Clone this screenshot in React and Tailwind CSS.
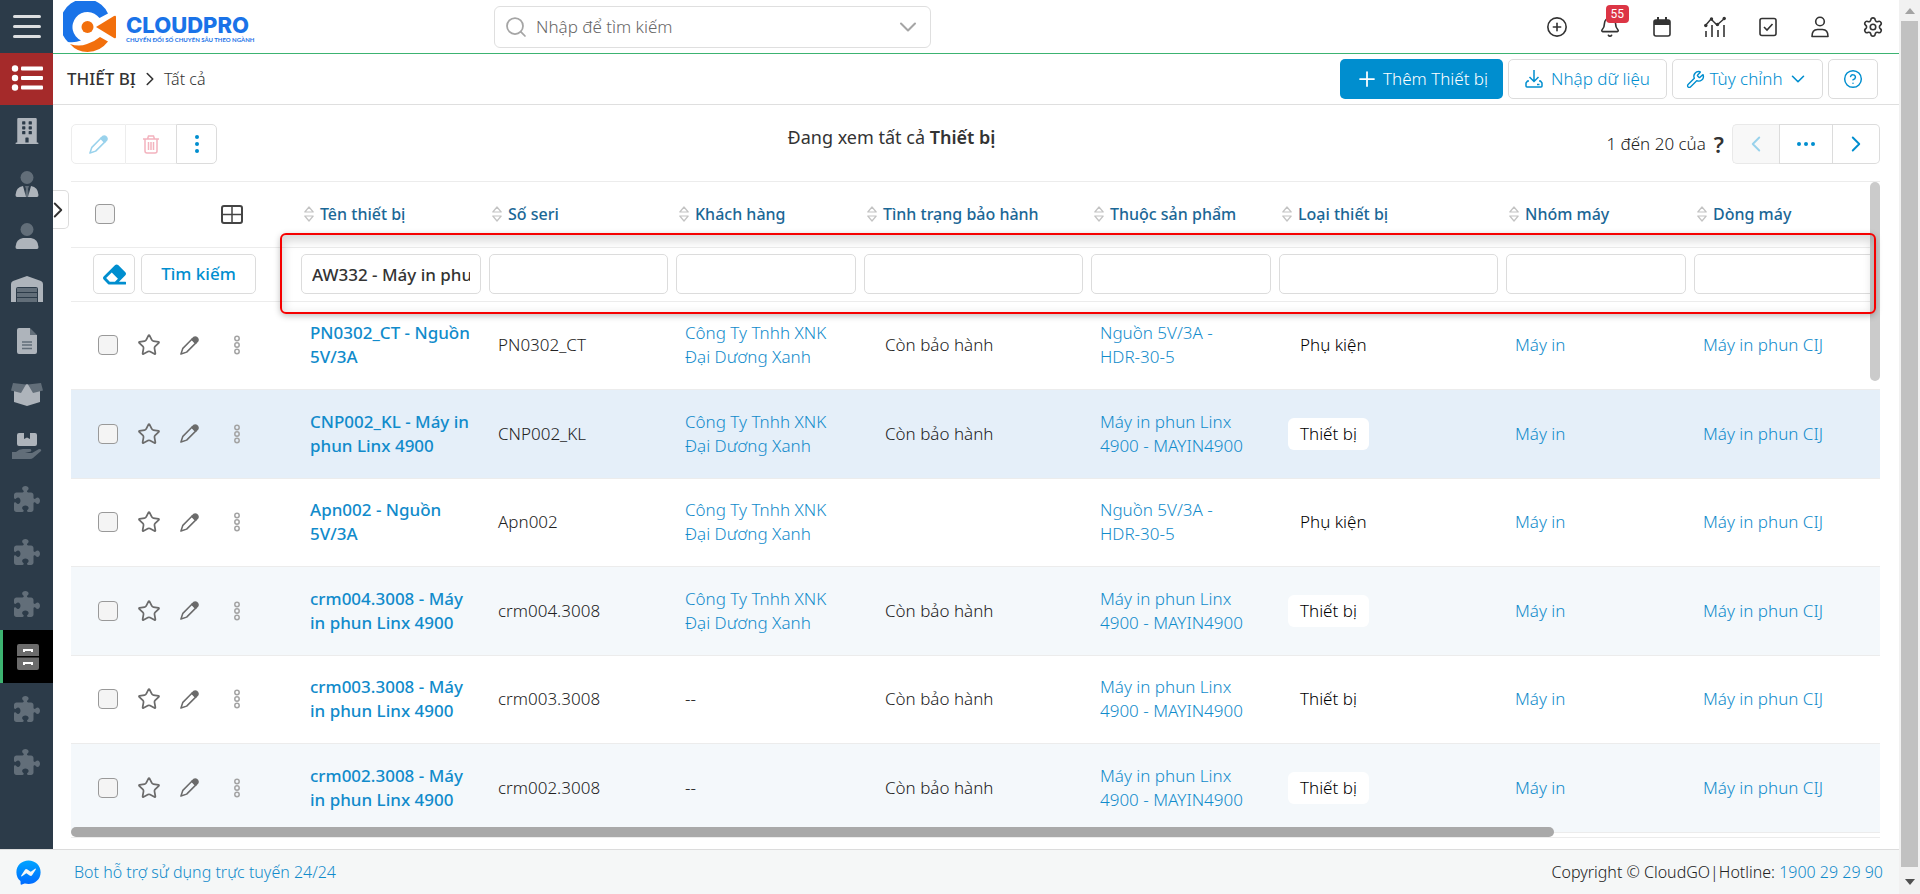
import { useState } from "react";
import {
  FaBuilding,
  FaEraser,
  FaFacebookMessenger,
} from "react-icons/fa";
import { FaPuzzlePiece } from "react-icons/fa6";
import {
  CirclePlus,
  Bell,
  Search,
  ChevronDown,
  ChevronLeft,
  ChevronRight,
  Plus,
  Wrench,
  CircleQuestionMark,
  Settings,
  Star,
} from "lucide-react";

const COLUMNS = [
  { key: "name", label: "Tên thiết bị", width: "w-[188px]" },
  { key: "serial", label: "Số seri", width: "w-[187px]" },
  { key: "customer", label: "Khách hàng", width: "w-[188px]" },
  { key: "warranty", label: "Tình trạng bảo hành", width: "w-[227px]" },
  { key: "product", label: "Thuộc sản phẩm", width: "w-[188px]" },
  { key: "type", label: "Loại thiết bị", width: "w-[227px]" },
  { key: "group", label: "Nhóm máy", width: "w-[188px]" },
  { key: "line", label: "Dòng máy", width: "" },
];

const COMPANY = "Công Ty Tnhh XNK Đại Dương Xanh";
const LINX = "Máy in phun Linx 4900 - MAYIN4900";
const POWER = "Nguồn 5V/3A - HDR-30-5";

const ROWS = [
  { name: "PN0302_CT - Nguồn 5V/3A", serial: "PN0302_CT", customer: COMPANY, warranty: "Còn bảo hành", product: POWER, type: "Phụ kiện" },
  { name: "CNP002_KL - Máy in phun Linx 4900", serial: "CNP002_KL", customer: COMPANY, warranty: "Còn bảo hành", product: LINX, type: "Thiết bị", active: true },
  { name: "Apn002 - Nguồn 5V/3A", serial: "Apn002", customer: COMPANY, warranty: "", product: POWER, type: "Phụ kiện" },
  { name: "crm004.3008 - Máy in phun Linx 4900", serial: "crm004.3008", customer: COMPANY, warranty: "Còn bảo hành", product: LINX, type: "Thiết bị" },
  { name: "crm003.3008 - Máy in phun Linx 4900", serial: "crm003.3008", customer: "", warranty: "Còn bảo hành", product: LINX, type: "Thiết bị" },
  { name: "crm002.3008 - Máy in phun Linx 4900", serial: "crm002.3008", customer: "", warranty: "Còn bảo hành", product: LINX, type: "Thiết bị" },
];

/* ---------- icons ---------- */

function LogoMark() {
  return (
    <svg viewBox="0 0 54 52" className="h-[52px] w-[54px]" aria-hidden="true">
      <path
        d="M45 12.500A25 25 0 1 0 5 41Q12 42 18 39.500A15 15 0 1 1 36.500 17Z"
        fill="#1a73e8"
      />
      <path d="M7 43Q16 46 24 43Q31 41 37 36L45 40.500Q37 51 24.500 51Q14 51 7 43Z" fill="#f26f0c" />
      <circle cx="24.500" cy="26" r="6" fill="#f26f0c" />
      <path d="M33 26L51 15Q53 14 53 16V36Q53 38 51 37Z" fill="#f26f0c" />
    </svg>
  );
}

function TieIcon() {
  return (
    <svg viewBox="0 0 24 26" className="h-[26px] w-6" aria-hidden="true">
      <circle cx="12" cy="6.500" r="6.500" fill="#626e79" />
      <path d="M10 15h4l-1 3 1 8h-4l1-8z" fill="#626e79" />
      <path d="M8 15l3 11H2Q.5 26 .5 24Q1 16 8 15zM16 15l-3 11h9q1.500 0 1.500-2Q23 16 16 15z" fill="#aeb4bb" />
    </svg>
  );
}

function UserIcon() {
  return (
    <svg viewBox="0 0 24 26" className="h-[26px] w-6" aria-hidden="true">
      <circle cx="12" cy="6.500" r="6.500" fill="#626e79" />
      <path d="M8 15h8q7 1 7.500 9 0 2-1.500 2H2Q.5 26 .5 24 1 16 8 15z" fill="#aeb4bb" />
    </svg>
  );
}

function WarehouseIcon() {
  return (
    <svg viewBox="0 0 34 26" className="h-[26px] w-[34px]" aria-hidden="true">
      <path d="M1 26V8Q1 6 3 5L17 0L31 5Q33 6 33 8V26H28V13Q28 11 26 11H8Q6 11 6 13V26Z" fill="#aeb4bb" />
      <path d="M7 12h20v4H7zM7 17h20v4H7zM7 22h20v4H7z" fill="#626e79" />
    </svg>
  );
}

function FileIcon() {
  return (
    <svg viewBox="0 0 20 26" className="h-[26px] w-5" aria-hidden="true">
      <path d="M2 0H13V7H20V24Q20 26 18 26H2Q0 26 0 24V2Q0 0 2 0Z" fill="#aeb4bb" />
      <path d="M13 0L20 7H13Z" fill="#626e79" />
      <path d="M5 14h10M5 17h10M5 20.500h10" stroke="#626e79" strokeWidth="1.500" />
    </svg>
  );
}

function BoxIcon() {
  return (
    <svg viewBox="0 0 34 24" className="h-6 w-[34px]" aria-hidden="true">
      <path d="M4 9L17 2L30 9V20L17 24L4 20Z" fill="#aeb4bb" />
      <path d="M3 1L16 2.500L11 11L1 8.500ZM31 1L18 2.500L23 11L33 8.500Z" fill="#626e79" />
    </svg>
  );
}

function HandBoxIcon() {
  return (
    <svg viewBox="0 0 30 26" className="h-[26px] w-[30px]" aria-hidden="true">
      <path d="M7 0H12V6L15 4.500L18 6V0H23Q25 0 25 2V11Q25 13 23 13H7Q5 13 5 11V2Q5 0 7 0Z" fill="#aeb4bb" />
      <path d="M0 19H4Q7 16 11 16H18Q20 16.500 19 18.500L13 20H20L27 16Q30 16 29 18L21 25Q20 26 18 26H0Z" fill="#626e79" />
    </svg>
  );
}

function CabinetIcon() {
  return (
    <svg viewBox="0 0 24 26" className="h-[26px] w-6" aria-hidden="true">
      <path d="M3 0H21Q23 0 23 2V12H1V2Q1 0 3 0ZM1 13.500H23V24Q23 26 21 26H3Q1 26 1 24Z" fill="#6b6b6b" />
      <path d="M8 8V6H16V8M8 21V19H16V21" stroke="#fff" strokeWidth="2" fill="none" />
    </svg>
  );
}

function BuildingIcon() {
  return <FaBuilding className="h-[26px] w-6 text-[#aeb4bb]" />;
}

function PuzzleIcon() {
  return <FaPuzzlePiece className="size-[26px] text-[#626e79]" />;
}

function ListIcon() {
  return (
    <svg viewBox="0 0 32 26" className="h-[26px] w-8" fill="#fff" aria-hidden="true">
      <circle cx="4" cy="3.500" r="3.200" />
      <circle cx="4" cy="13" r="3.200" />
      <circle cx="4" cy="22.500" r="3.200" />
      <rect x="10" y="1.500" width="22" height="4" rx="1" />
      <rect x="10" y="11" width="22" height="4" rx="1" />
      <rect x="10" y="20.500" width="22" height="4" rx="1" />
    </svg>
  );
}

function PencilIcon({ className }) {
  return (
    <svg viewBox="0 0 20 20" className={className} fill="none" stroke="currentColor" strokeWidth="1.600" strokeLinejoin="round" aria-hidden="true">
      <path d="M12.500 3.500L3 13L1 19L7 17L16.500 7.500Z" />
      <path d="M12.500 3.500L14.500 1.500Q16 .5 17.500 1.500L18.500 2.500Q19.500 4 18.500 5.500L16.500 7.500Z" fill="currentColor" />
    </svg>
  );
}

function TrashIcon() {
  return (
    <svg viewBox="0 0 16 19" className="h-[19px] w-4" fill="none" stroke="#f3b3be" strokeWidth="1.500" aria-hidden="true">
      <path d="M0 4H16M4.500 4L5.500 1H10.500L11.500 4M2 4V16Q2 18 4 18H12Q14 18 14 16V4M5.500 7V15M8 7V15M10.500 7V15" />
    </svg>
  );
}

function TableIcon() {
  return (
    <svg viewBox="0 0 22 20" className="h-5 w-[22px]" fill="none" stroke="#444" strokeWidth="2" aria-hidden="true">
      <rect x="1" y="2" width="20" height="17" rx="2" />
      <path d="M1 10.500H21M11 2V19" strokeWidth="1.500" />
    </svg>
  );
}

function SortIcon() {
  return (
    <svg viewBox="0 0 10 16" className="h-4 w-[10px] shrink-0" fill="none" stroke="#c3c3c3" strokeWidth="1.200" strokeLinejoin="round" aria-hidden="true">
      <path d="M5 1L9.200 6H.8ZM5 15L.8 10H9.200Z" />
    </svg>
  );
}

function DotsIcon() {
  return (
    <svg viewBox="0 0 8 20" className="h-5 w-2" fill="none" stroke="#a3a3a3" strokeWidth="1.500" aria-hidden="true">
      <circle cx="4" cy="3.500" r="2.200" />
      <circle cx="4" cy="10" r="2.200" />
      <circle cx="4" cy="16.500" r="2.200" />
    </svg>
  );
}

function CalendarIcon() {
  return (
    <svg viewBox="0 0 18 20" className="h-5 w-[18px]" aria-hidden="true">
      <rect x="1" y="3" width="16" height="16" rx="2" fill="none" stroke="#333" strokeWidth="1.600" />
      <path d="M1 3H17V8H1ZM4 0H6V4H4ZM12 0H14V4H12Z" fill="#333" />
    </svg>
  );
}

function ReportIcon() {
  return (
    <svg viewBox="0 0 22 22" className="h-[22px] w-[22px]" fill="none" stroke="#333" strokeWidth="1.500" aria-hidden="true">
      <path d="M1 10L7 3L13 9L21 2" />
      <path d="M2 15V21M8 9V21M14 14V21M20 9V21" strokeWidth="1.600" />
      <g fill="#333" stroke="none">
        <circle cx="1.800" cy="9.500" r="1.700" />
        <circle cx="7.500" cy="3" r="1.700" />
        <circle cx="13.500" cy="8.500" r="1.700" />
        <circle cx="20.200" cy="2.500" r="1.700" />
      </g>
    </svg>
  );
}

function TaskIcon() {
  return (
    <svg viewBox="0 0 18 20" className="h-5 w-[18px]" fill="none" stroke="#333" strokeWidth="1.600" aria-hidden="true">
      <rect x="1" y="1.500" width="16" height="17" rx="2" />
      <path d="M5 10L8 13L13.500 7" />
    </svg>
  );
}

function ProfileIcon() {
  return (
    <svg viewBox="0 0 18 22" className="h-[22px] w-[18px]" fill="none" stroke="#333" strokeWidth="1.600" aria-hidden="true">
      <circle cx="9" cy="5.500" r="4.300" />
      <path d="M1 20.500Q1 13.500 6.500 13.500H11.500Q17 13.500 17 20.500Z" strokeLinejoin="round" />
    </svg>
  );
}

function ImportIcon() {
  return (
    <svg viewBox="0 0 18 18" className="h-[18px] w-[18px]" fill="none" stroke="currentColor" strokeWidth="1.500" aria-hidden="true">
      <path d="M9 0V11M4.500 7L9 11.500L13.500 7" />
      <path d="M4 11H2.500L1 13V16Q1 17 2 17H16Q17 17 17 16V13L15.500 11H14M12 14.500H14.500" />
    </svg>
  );
}

/* ---------- layout parts ---------- */

const MENU = [
  { label: "Khách hàng tổ chức", Icon: BuildingIcon },
  { label: "Người liên hệ", Icon: TieIcon },
  { label: "Cá nhân", Icon: UserIcon },
  { label: "Kho", Icon: WarehouseIcon },
  { label: "Tài liệu", Icon: FileIcon },
  { label: "Sản phẩm", Icon: BoxIcon },
  { label: "Giao hàng", Icon: HandBoxIcon },
  { label: "Mở rộng 1", Icon: PuzzleIcon },
  { label: "Mở rộng 2", Icon: PuzzleIcon },
  { label: "Mở rộng 3", Icon: PuzzleIcon },
  { label: "Thiết bị", Icon: CabinetIcon, active: true },
  { label: "Mở rộng 4", Icon: PuzzleIcon },
  { label: "Mở rộng 5", Icon: PuzzleIcon },
];

function Sidebar() {
  return (
    <aside className="flex w-[53px] shrink-0 flex-col bg-[#2c3b49]">
      <button aria-label="Menu" className="flex h-[53px] flex-col items-center justify-center gap-[7px]">
        <span className="h-[3px] w-7 rounded-sm bg-[#dcdee0]" />
        <span className="h-[3px] w-7 rounded-sm bg-[#dcdee0]" />
        <span className="h-[3px] w-7 rounded-sm bg-[#dcdee0]" />
      </button>
      <button aria-label="Danh sách" className="flex h-[52px] items-center justify-center bg-[#a52a2a] pb-[2px]">
        <ListIcon />
      </button>
      <nav className="flex h-[683px] flex-col">
        {MENU.map(({ label, Icon, active }) => (
          <a
            key={label}
            href="#"
            aria-label={label}
            className={`flex flex-1 items-center justify-center ${
              active ? "border-l-[3px] border-[#3cb371] bg-black" : ""
            }`}
          >
            <Icon />
          </a>
        ))}
      </nav>
    </aside>
  );
}

function TopBar() {
  const item = "relative flex flex-1 items-center justify-center";
  return (
    <header className="flex h-[54px] items-center border-b border-[#3cb371] pl-[10px]">
      <a href="#" className="flex w-[431px] items-center gap-[9px]" aria-label="CloudPro">
        <LogoMark />
        <span className="flex flex-col pt-1 text-[#1a73e8]">
          <span className="font-['Inter',sans-serif] text-[22px] leading-[22px] font-extrabold">CLOUDPRO</span>
          <span className="font-['Lato',sans-serif] text-[6px] leading-2 font-bold whitespace-nowrap">
            CHUYỂN ĐỔI SỐ CHUYÊN SÂU THEO NGÀNH
          </span>
        </span>
      </a>
      <label className="flex h-[42px] w-[437px] items-center gap-2 rounded-md border border-[#dfdfdf] pr-2 pl-[9px]">
        <Search className="size-6 text-[#a5a5a5]" strokeWidth={1.75} />
        <input
          type="text"
          aria-label="Tìm kiếm"
          placeholder="Nhập để tìm kiếm"
          className="min-w-0 flex-1 text-[17px] font-light outline-none placeholder:text-[#666]"
        />
        <ChevronDown className="size-7 text-[#a5a5a5]" strokeWidth={1.75} />
      </label>
      <div className="ml-auto flex h-full w-[368px] items-center text-[#333]">
        <button className={item} aria-label="Thêm nhanh">
          <CirclePlus className="size-[22px]" strokeWidth={1.75} />
        </button>
        <button className={item} aria-label="Thông báo">
          <Bell className="size-[22px]" strokeWidth={1.75} />
          <span className="absolute -top-[11px] left-[22px] rounded bg-[#dc3545] px-[5px] font-['Roboto',sans-serif] text-[12px] leading-[18px] text-white">
            55
          </span>
        </button>
        <button className={item} aria-label="Lịch"><CalendarIcon /></button>
        <button className={item} aria-label="Báo cáo"><ReportIcon /></button>
        <button className={item} aria-label="Công việc"><TaskIcon /></button>
        <button className={item} aria-label="Tài khoản"><ProfileIcon /></button>
        <button className={item} aria-label="Cài đặt">
          <Settings className="size-[22px]" strokeWidth={1.75} />
        </button>
      </div>
    </header>
  );
}

function ActionBar() {
  const btn =
    "flex h-10 items-center justify-center rounded-[5px] border border-[#dcdcdc] text-[17px] font-light text-[#008ecf]";
  return (
    <div className="flex h-[51px] items-center border-b border-[#dfdfdf] pr-[21px] pl-[14px] text-[#333]">
      <h1 className="text-[17px] font-medium">THIẾT BỊ</h1>
      <ChevronRight className="mx-[3px] size-[22px]" strokeWidth={1.75} />
      <a href="#" className="text-base font-light">Tất cả</a>
      <div className="ml-auto flex gap-[5px]">
        <button className="flex h-10 w-[163px] items-center justify-center gap-1 rounded-[5px] bg-[#008ecf] text-[17px] font-light text-white">
          <Plus className="size-6" strokeWidth={1.75} />
          Thêm Thiết bị
        </button>
        <button className={`${btn} w-[159px] gap-2`}>
          <ImportIcon />
          Nhập dữ liệu
        </button>
        <button className={`${btn} w-[151px] gap-1`}>
          <Wrench className="size-[19px]" strokeWidth={1.75} />
          Tùy chỉnh
          <ChevronDown className="size-[22px]" strokeWidth={1.75} />
        </button>
        <button className={`${btn} w-[50px]`} aria-label="Trợ giúp">
          <CircleQuestionMark className="size-5" strokeWidth={1.75} />
        </button>
      </div>
    </div>
  );
}

function Toolbar() {
  return (
    <div className="flex h-10 items-center">
      <div className="w-[452px]">
        <div className="flex h-10 w-[146px]">
          <button aria-label="Sửa" className="flex w-[55px] items-center justify-center rounded-l-[5px] border border-[#ededed] text-[#99d2ec]">
            <PencilIcon className="size-[19px]" />
          </button>
          <button aria-label="Xóa" className="flex w-[50px] items-center justify-center border-y border-[#ededed]">
            <TrashIcon />
          </button>
          <button aria-label="Thêm" className="flex flex-1 flex-col items-center justify-center gap-[3px] rounded-r-[5px] border border-[#dcdcdc]">
            <span className="size-1 rounded-full bg-[#008ecf]" />
            <span className="size-1 rounded-full bg-[#008ecf]" />
            <span className="size-1 rounded-full bg-[#008ecf]" />
          </button>
        </div>
      </div>
      <p className="flex-1 pb-[14px] text-center text-lg text-[#333]">
        Đang xem tất cả <strong className="font-semibold">Thiết bị</strong>
      </p>
      <div className="flex w-[620px] items-center justify-end">
        <span className="text-[17px] font-light text-[#222]">1 đến 20 của</span>
        <button className="px-2 text-[22px] font-semibold text-[#333]">?</button>
        <div className="flex h-10 w-[148px] text-[#008ecf]">
          <button aria-label="Trang trước" className="flex w-[47px] items-center justify-center rounded-l-[5px] border border-r-0 border-[#e9e9e9] bg-[#f8f8f8] text-[#99d2ec]">
            <ChevronLeft className="size-[26px]" strokeWidth={1.75} />
          </button>
          <button aria-label="Chọn trang" className="flex w-[54px] items-center justify-center gap-[3px] border border-[#dcdcdc]">
            <span className="size-1 rounded-full bg-[#008ecf]" />
            <span className="size-1 rounded-full bg-[#008ecf]" />
            <span className="size-1 rounded-full bg-[#008ecf]" />
          </button>
          <button aria-label="Trang sau" className="flex flex-1 items-center justify-center rounded-r-[5px] border border-l-0 border-[#dcdcdc]">
            <ChevronRight className="size-[26px]" strokeWidth={1.75} />
          </button>
        </div>
      </div>
    </div>
  );
}

function Checkbox({ label }) {
  return (
    <input
      type="checkbox"
      aria-label={label}
      className="size-5 shrink-0 appearance-none rounded border border-[#999] bg-[#f4f4f4]"
    />
  );
}

function DeviceRow({ row }) {
  const [starred, setStarred] = useState(false);
  const bg = row.active ? "bg-[#e5eff9]" : "even:bg-[#f4f8fb]";

  return (
    <tr className={`border-b border-[#ececec] odd:h-[88px] even:h-[89px] ${bg}`}>
      <td className="pl-[27px]">
        <div className="flex items-center text-[#6b6b6b]">
          <Checkbox label={`Chọn ${row.serial}`} />
          <button aria-label="Đánh dấu" className="ml-[19px]" onClick={() => setStarred(!starred)}>
            <Star className={`size-6 ${starred ? "fill-amber-400" : ""}`} strokeWidth={1.75} />
          </button>
          <button aria-label="Sửa" className="ml-[19px]">
            <PencilIcon className="size-[19px]" />
          </button>
          <button aria-label="Thao tác" className="ml-[34px]">
            <DotsIcon />
          </button>
        </div>
      </td>
      <td className="pr-2 pl-[13px] font-medium">
        <a href="#" className="text-[#118bcb]">{row.name}</a>
      </td>
      <td className="pl-[13px]">{row.serial}</td>
      <td className="pr-6 pl-[13px]">
        {row.customer ? <a href="#" className="text-[#118bcb]">{row.customer}</a> : "--"}
      </td>
      <td className="pl-[25px]">{row.warranty}</td>
      <td className="pr-6 pl-[13px]">
        <a href="#" className="text-[#118bcb]">{row.product}</a>
      </td>
      <td className="pl-[13px] text-black">
        <span className={`inline-block rounded-md px-3 py-1 ${row.type === "Thiết bị" ? "bg-white" : ""}`}>
          {row.type}
        </span>
      </td>
      <td className="pl-[13px]">
        <a href="#" className="text-[#118bcb]">Máy in</a>
      </td>
      <td className="pl-[13px]">
        <a href="#" className="text-[#118bcb]">Máy in phun CIJ</a>
      </td>
    </tr>
  );
}

function DeviceTable() {
  const [filters, setFilters] = useState({ name: "AW332 - Máy in phun Linx" });

  return (
    <div className="relative mt-[17px] h-[657px] border-y border-[#ececec]">
      <table className="w-full table-fixed border-collapse text-left text-[17px] leading-6 font-light text-[#222]">
        <thead>
          <tr className="h-[65px] border-b border-[#ececec]">
            <th className="w-[226px] pl-6">
              <div className="flex items-center">
                <Checkbox label="Chọn tất cả" />
                <button aria-label="Cột hiển thị" className="ml-[106px]">
                  <TableIcon />
                </button>
              </div>
            </th>
            {COLUMNS.map((col) => (
              <th key={col.key} className={`pl-[7px] text-base font-medium text-[#1b6796] ${col.width}`}>
                <button className="flex items-center gap-[6px]">
                  <SortIcon />
                  {col.label}
                </button>
              </th>
            ))}
          </tr>
          <tr className="h-[54px] border-b border-[#ececec]">
            <td className="pl-[22px]">
              <div className="flex gap-[6px] text-[#008ecf]">
                <button aria-label="Xóa bộ lọc" className="flex h-10 w-[42px] items-center justify-center rounded-[5px] border border-[#dcdcdc]">
                  <FaEraser className="size-[23px]" />
                </button>
                <button className="h-10 w-[115px] rounded-[5px] border border-[#dcdcdc] font-medium">
                  Tìm kiếm
                </button>
              </div>
            </td>
            {COLUMNS.map((col) => (
              <td key={col.key} className="px-1">
                <input
                  type="text"
                  aria-label={col.label}
                  value={filters[col.key] ?? ""}
                  onChange={(e) => setFilters({ ...filters, [col.key]: e.target.value })}
                  className="h-10 w-full rounded-[5px] border border-[#dcdcdc] bg-white px-[10px] text-[17px] font-medium text-[#333] outline-none"
                />
              </td>
            ))}
          </tr>
        </thead>
        <tbody>
          {ROWS.map((row) => (
            <DeviceRow key={row.serial} row={row} />
          ))}
        </tbody>
      </table>

      {/* overlay scrollbars */}
      <div className="absolute top-0 right-0 h-[199px] w-[10px] rounded-full bg-[#cbcbcb]" />
      <div className="absolute bottom-0 left-0 h-[10px] w-[82%] rounded-full bg-[#a9a9a9]" />

      {/* highlighted filter area */}
      <div className="pointer-events-none absolute top-[51px] right-1 left-[209px] h-[81px] rounded-md border-2 border-[#f50000] shadow-[inset_0_4px_10px_2px_rgba(0,0,0,0.15),0_2px_6px_rgba(0,0,0,0.25)]" />
    </div>
  );
}

function Footer() {
  return (
    <footer className="flex h-[45px] items-center border-t border-[#dcdcdc] bg-[#f5f7f7] pr-4 pl-4 text-base font-light text-[#222]">
      <svg width="0" height="0" className="absolute" aria-hidden="true">
        <linearGradient id="messenger" x1="0" y1="0" x2="0" y2="1">
          <stop offset="0" stopColor="#00a5ff" />
          <stop offset="1" stopColor="#006aff" />
        </linearGradient>
      </svg>
      <a href="#" className="flex items-center gap-[33px] text-[#118bcb]">
        <FaFacebookMessenger className="size-[25px]" fill="url(#messenger)" />
        Bot hỗ trợ sử dụng trực tuyến 24/24
      </a>
      <span className="ml-auto">
        Copyright © CloudGO|Hotline: <a href="#" className="text-[#118bcb]">1900 29 29 90</a>
      </span>
    </footer>
  );
}

function PageScrollbar() {
  return (
    <div className="flex w-[21px] shrink-0 flex-col items-center bg-[#f1f1f1]">
      <svg viewBox="0 0 10 6" className="mt-2 h-[6px] w-[10px]" aria-hidden="true">
        <path d="M0 6L5 0L10 6Z" fill="#a3a3a3" />
      </svg>
      <div className="mt-[7px] w-[17px] flex-1 bg-[#c1c1c1]" />
      <svg viewBox="0 0 10 6" className="mt-3 mb-[9px] h-[6px] w-[10px]" aria-hidden="true">
        <path d="M0 0H10L5 6Z" fill="#505050" />
      </svg>
    </div>
  );
}

export default function App() {
  return (
    <div className="flex min-h-screen bg-white font-['Noto_Sans',sans-serif]">
      <div className="flex min-w-0 flex-1 flex-col">
        <div className="flex flex-1">
          <Sidebar />
          <div className="relative flex min-w-0 flex-1 flex-col">
            <TopBar />
            <ActionBar />
            <main className="pt-[19px] pr-[19px] pl-[18px]">
              <Toolbar />
              <DeviceTable />
            </main>
            <button aria-label="Mở bộ lọc" className="absolute top-[190px] left-0 flex h-[39px] w-4 items-center justify-center rounded-r-[5px] border border-l-0 border-[#dcdcdc] bg-white pr-[5px] text-[#333]">
              <ChevronRight className="size-[26px] shrink-0" strokeWidth={1.75} />
            </button>
          </div>
        </div>
        <Footer />
      </div>
      <PageScrollbar />
    </div>
  );
}
